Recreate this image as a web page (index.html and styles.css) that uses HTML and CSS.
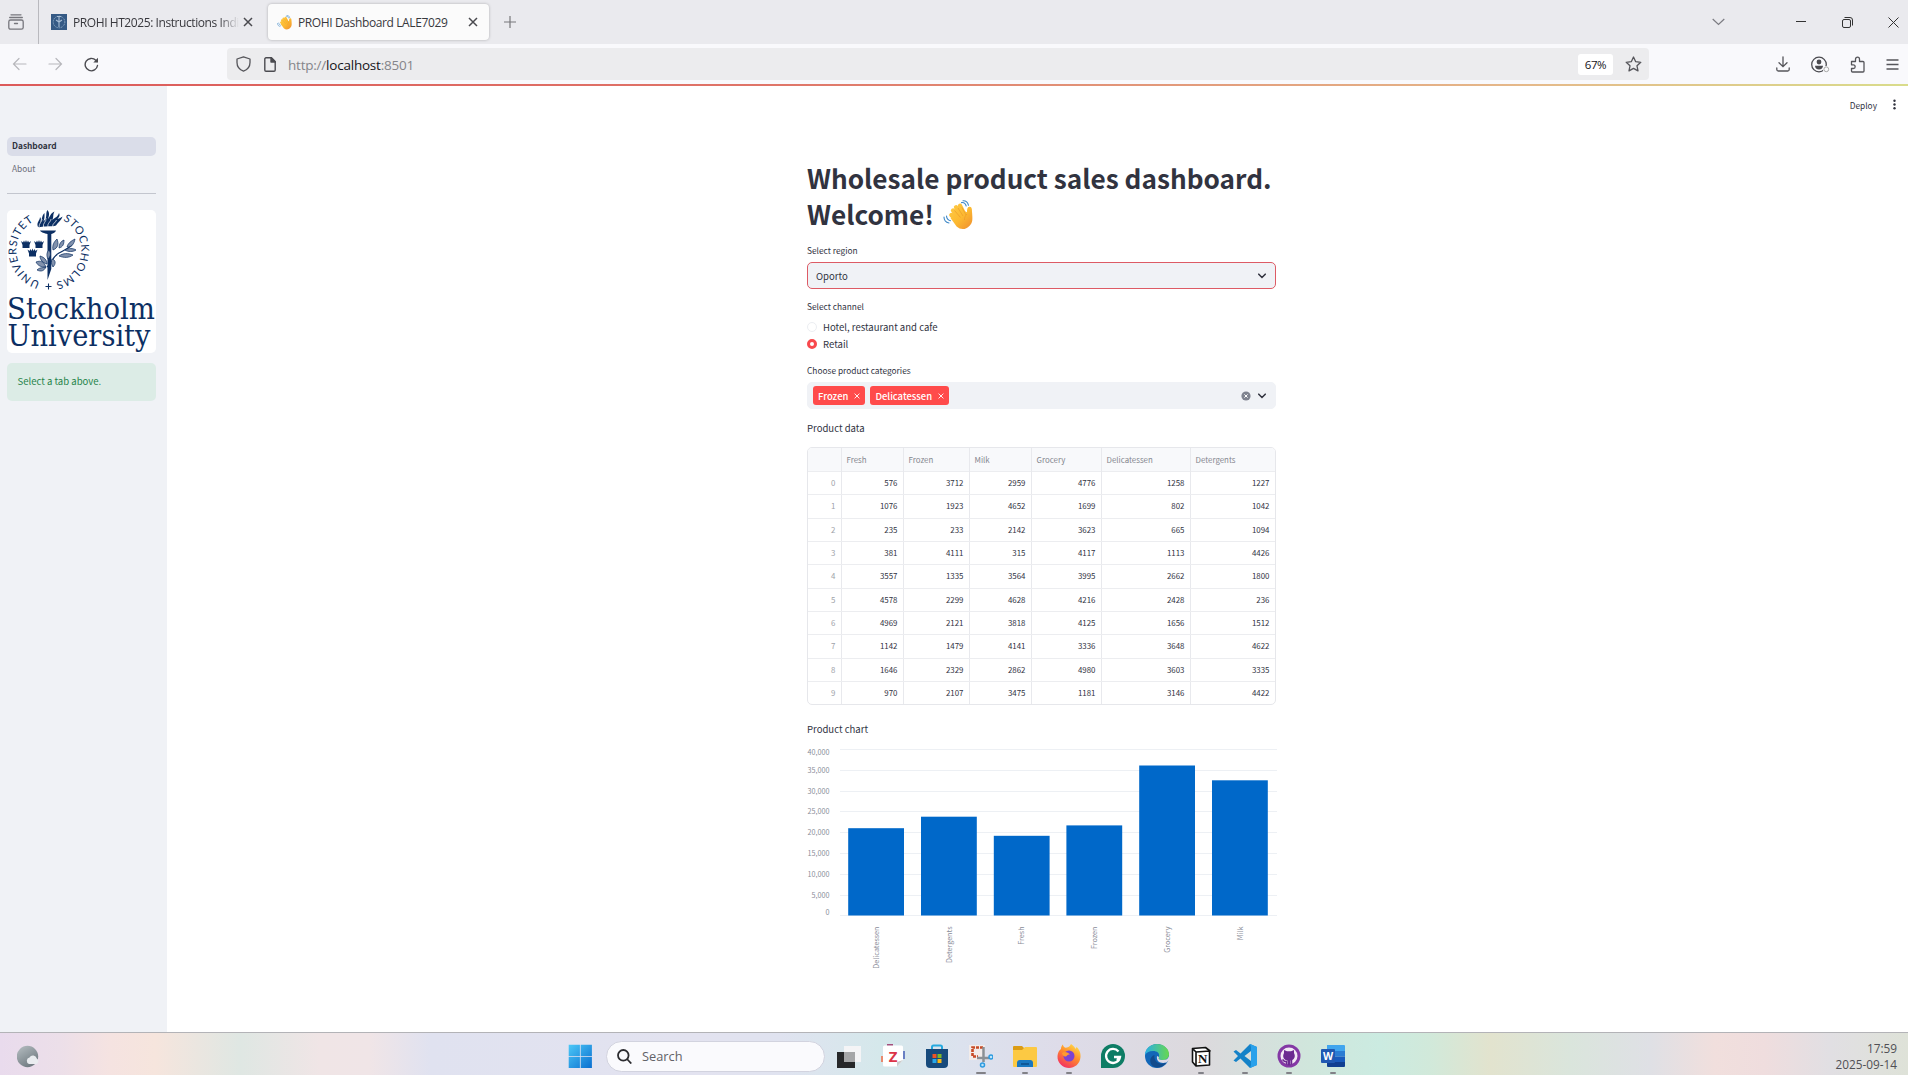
FILE: index.html
```html
<!DOCTYPE html>
<html lang="en">
<head>
<meta charset="utf-8">
<title>PROHI Dashboard LALE7029</title>
<link rel="stylesheet" href="styles.css">
</head>
<body>
<svg width="0" height="0" class="defs">
  <defs>
    <linearGradient id="gHand" x1="0" y1="0" x2="30" y2="30" gradientUnits="userSpaceOnUse"><stop offset="0" stop-color="#ffd24d"/><stop offset=".6" stop-color="#fcb931"/><stop offset="1" stop-color="#ee8a2e"/></linearGradient>
    <symbol id="wave" viewBox="0 0 30 30">
      <g fill="none" stroke="url(#gHand)" stroke-linecap="round" stroke-width="4.300"><path d="M10 10.500l7 9M13 7.200l7 10M17 5.700l5.500 11M8.300 15l8 8"/></g>
      <path d="M10 17 20 10.500l4 1.800c0-3 .2-5.200 2.400-5.600 2.800-.3 2.500 3 2.700 6 .4 6.500.9 9.500-2.500 13-4 4.300-9 4.300-13 .8L7.500 18z" fill="url(#gHand)"/>
      <path d="M11.500 10.500l6 7M15 8l5 8M19 7.500l4 7.500M24 14c-2 2-2.500 3.500-2.500 6" fill="none" stroke="#e8952a" stroke-width=".6"/>
      <path d="M18.500 2.600c2.500-.4 4 1 4.700 3.400M20 .8c3-.2 4.800 1.800 5.500 4.500M3.500 16c.2 2.500 1.700 4.200 4 4.700M1 17c0 3.200 2 5.400 5 6" fill="none" stroke="#3c87c7" stroke-width="1.100" stroke-linecap="round"/>
    </symbol>
    <symbol id="x" viewBox="0 0 10 10"><path d="M1 1l8 8M9 1 1 9" fill="none" stroke="currentColor" stroke-width="1.500"/></symbol>
    <symbol id="chev" viewBox="0 0 10 10"><path d="M2.300 3.500l2.700 2.700 2.700-2.700" fill="none" stroke="currentColor" stroke-width="1.300" stroke-linecap="round"/></symbol>
  </defs>
</svg>

<header class="tabstrip">
  <svg class="recent" width="16" height="16" viewBox="0 0 16 16" fill="none" stroke="#77777d" stroke-width="1.300" stroke-linecap="round"><path d="M3 .8h10M1.700 3.500h12.600"/><rect x=".8" y="6" width="14.400" height="9.200" rx="1.800"/><path d="M6.500 9.500h3"/></svg>
  <div class="tab">
    <svg width="16" height="16" viewBox="0 0 16 16"><rect width="16" height="16" fill="#355a85"/><circle cx="8" cy="8" r="5.800" fill="none" stroke="#8eaac6" stroke-dasharray="1.200 .7"/><path d="M8 3v10M5 6l3 2 3-2M6 2.500h4" stroke="#a9bfd6" stroke-width="1.100" fill="none"/></svg>
    <span class="tab-title fade">PROHI HT2025: Instructions Indi</span>
    <svg class="tab-close" width="10" height="10"><use href="#x"/></svg>
  </div>
  <div class="tab active">
    <svg width="15" height="15"><use href="#wave"/></svg>
    <span class="tab-title">PROHI Dashboard LALE7029</span>
    <svg class="tab-close" width="10" height="10"><use href="#x"/></svg>
  </div>
  <svg class="plus" width="12" height="12" viewBox="0 0 12 12"><path d="M6 0v12M0 6h12" stroke="#77777b" stroke-width="1.200"/></svg>
  <div class="window-controls">
    <svg width="13" height="8" viewBox="0 0 13 8"><path d="M.7 1l5.800 5.500L12.300 1" fill="none" stroke="#7c7c82" stroke-width="1.200"/></svg>
    <svg width="10" height="10" viewBox="0 0 10 10"><path d="M0 4.500h10" stroke="#333"/></svg>
    <svg width="11" height="11" viewBox="0 0 11 11" fill="none" stroke="#333"><rect x=".5" y="2.500" width="8" height="8" rx="1.500"/><path d="M2.500.5h5.500a2.500 2.500 0 0 1 2.500 2.500v5.500"/></svg>
    <svg width="11" height="11" viewBox="0 0 11 11"><path d="M.5.5l10 10M10.500.5l-10 10" stroke="#333"/></svg>
  </div>
</header>

<nav class="toolbar">
  <div class="nav-buttons">
    <svg width="15" height="14" viewBox="0 0 15 14" fill="none" stroke="#b7b7bb" stroke-width="1.200" stroke-linecap="round"><path d="M14 7H1.500M7 1.500 1.500 7 7 12.500"/></svg>
    <svg width="15" height="14" viewBox="0 0 15 14" fill="none" stroke="#b7b7bb" stroke-width="1.200" stroke-linecap="round"><path d="M1 7h12.500M8 1.500 13.500 7 8 12.500"/></svg>
    <svg width="15" height="15" viewBox="0 0 15 15" fill="none" stroke="#4b4b50" stroke-width="1.400" stroke-linecap="round"><path d="M13.500 8.500a6.200 6.200 0 1 1-1.700-5.200l1.200 1.200"/><path d="M14 .8v4.700H9.300z" fill="#4b4b50" stroke="none"/></svg>
  </div>
  <div class="urlbar">
    <svg width="15" height="16" viewBox="0 0 15 16" fill="none" stroke="#55555a" stroke-width="1.300" stroke-linejoin="round"><path d="M7.500.8 14 3v3.500c0 4-2 7-6.500 8.700C3 13.500 1 10.500 1 6.500V3z"/></svg>
    <svg width="12" height="15" viewBox="0 0 12 15" fill="none" stroke="#4b4b50" stroke-width="1.400" stroke-linejoin="round"><path d="M2 .8h5.500l3.700 3.700V13a1.200 1.200 0 0 1-1.200 1.200H2A1.200 1.200 0 0 1 .8 13V2A1.200 1.200 0 0 1 2 .8z"/><path d="M7 .8V5h4.200z" fill="#4b4b50"/></svg>
    <span class="url">http://<b>localhost</b>:8501</span>
    <span class="zoom">67%</span>
    <svg width="17" height="16" viewBox="0 0 17 16"><path d="M8.500 1l2.200 4.700 5.100.6-3.800 3.500 1 5.100-4.500-2.500L4 14.900l1-5.100L1.200 6.300l5.100-.6z" fill="none" stroke="#55555a" stroke-width="1.300" stroke-linejoin="round"/></svg>
  </div>
  <div class="tools">
    <svg width="14" height="16" viewBox="0 0 14 16" fill="none" stroke="#55555a" stroke-width="1.300" stroke-linecap="round"><path d="M7 .8v9.700M3 6.700l4 4 4-4M.8 12v1.500c0 1 .7 1.500 1.500 1.500h9.400c.8 0 1.500-.5 1.500-1.500V12"/></svg>
    <svg width="19" height="17" viewBox="0 0 19 17"><circle cx="8" cy="8.500" r="7.300" fill="none" stroke="#4b4b50" stroke-width="1.300"/><circle cx="8" cy="6" r="2.400" fill="#4b4b50"/><path d="M4 9.800h8c0 2.200-1.600 3.700-4 3.700s-4-1.500-4-3.700z" fill="#4b4b50"/><circle cx="15.300" cy="13.300" r="3.400" fill="#f9f9fb"/><circle cx="15.300" cy="13.300" r="2.400" fill="none" stroke="#aaa"/></svg>
    <svg width="15" height="17" viewBox="0 0 15 17"><path d="M1.500 5.500h4V3.200a2 2 0 0 1 4 0v2.300h3.500a1 1 0 0 1 1 1V15a1 1 0 0 1-1 1H2.500a1 1 0 0 1-1-1v-2.500h1.800a1.800 1.800 0 0 0 0-3.700H1.500z" fill="none" stroke="#55555a" stroke-width="1.300" stroke-linejoin="round"/></svg>
    <svg width="13" height="11" viewBox="0 0 13 11"><path d="M.5 1h12M.5 5.500h12M.5 10h12" stroke="#55555a" stroke-width="1.300"/></svg>
  </div>
</nav>
<div class="progress"></div>

<div class="app">
  <aside class="sidebar">
    <a class="nav-item current">Dashboard</a>
    <a class="nav-item">About</a>
    <hr>
    <svg class="logo" width="149" height="143" viewBox="0 0 149 143">
      <defs>
        <path id="arcL" d="M33 71.800A33 33 0 0 1 27 11"/>
        <path id="arcR" d="M56 10.500A33 33 0 0 1 49 72"/>
      </defs>
      <g class="ring"><text><textPath href="#arcL" textLength="77">UNIVERSITET</textPath></text><text><textPath href="#arcR" textLength="80">STOCKHOLMS</textPath></text><path d="M41.500 73.500v6M38.500 76.500h6" stroke="#0c2f63" stroke-width="1.100"/></g>
      <g fill="#0c2f63">
        <path d="M33 20.500h16c-.5 2-2.700 2.700-4.700 3.500v35l-3.800 11V24c-3-.8-6.500-1.400-7.500-3.500z"/>
        <path d="M31 17c-2-5 2-6 2-10 1.500 1.500 1 4-.3 6C36 10 34 6 37.500 3c0 4 .3 5-1 8.500C41 8 38 3 40.500 0c2.500 3 1.500 6 .5 9 2.500-3 2.500-6 6.500-7.500-2 3.500-.5 6-2.500 9 3-3.500 5.500-3 7-7.500 1.500 3-.5 4.500-1.500 6 2-.3 3.500-1.500 5-2.500-1 4-4 5-6.500 9-2 1.200-4 .5-6 .7l-5 .3c-2 0-5.500 1-7 .5z"/>
        <g id="crown"><path d="M14 31l2 1.500 1-2 1 2 1-2.500 1 2.500 1-2 1 2 2-1.500-1.500 4v3h-7v-3z"/></g>
        <use href="#crown" x="13"/><use href="#crown" x="6.500" y="8.500"/>
      </g>
      <path d="M32 17c0-4 3-5 3-8M36.500 17c-1-4 3-5 2.500-9M41 17c-1-4 3-5 3-8M45.500 17c0-4 3-4 4-7" stroke="#fff" stroke-width=".7" fill="none"/>
      <g fill="#8292ad" stroke="#0c2f63" stroke-width=".7">
        <path d="M40 57c6-5 5-10 12-14 5-3 9-4 13-8" fill="none" stroke-width="1.200"/>
        <path d="M46 40c-1-5 1-8 4-11 2 5 1 9-4 11zM52 38c0-4 2-7 5-8 0 4-1 7-5 8zM60 37c1-4 4-6 8-8-1 5-3 8-8 8zM52 46c4-3 9-3 14-1-4 3-9 3-14 1zM58 40c4-2 8-2 11 0-3 2-8 2-11 0zM29 52c5-2 8 0 10 5-5 0-8-1-10-5zM33 46c4 1 7 4 7 8-4-1-7-4-7-8zM45 49c4 1 4 5 1 8-2-3-2-6-1-8zM30 60c3-3 6-2 9-3-2 4-5 5-9 3zM41 49c-2-4-1-7 1-9 2 3 2 6-1 9z"/>
      </g>
      <g class="wordmark"><text x="0" y="109" textLength="148" lengthAdjust="spacingAndGlyphs">Stockholm</text><text x=".5" y="135.500" textLength="143" lengthAdjust="spacingAndGlyphs">University</text></g>
    </svg>
    <div class="alert">Select a tab above.</div>
  </aside>

  <main class="main">
    <div class="app-bar"><span>Deploy</span><svg width="3" height="11" viewBox="0 0 3 11" fill="#31333f"><circle cx="1.500" cy="1.700" r="1.200"/><circle cx="1.500" cy="5.500" r="1.200"/><circle cx="1.500" cy="9.300" r="1.200"/></svg></div>
    <div class="content">
      <h1>Wholesale product sales dashboard.<br>Welcome! <svg class="hand" width="30" height="30"><use href="#wave"/></svg></h1>
      <label>Select region</label>
      <div class="field select focused"><span>Oporto</span><svg class="arrow" width="12" height="12"><use href="#chev"/></svg></div>
      <label>Select channel</label>
      <div class="radio"><i></i>Hotel, restaurant and cafe</div>
      <div class="radio checked"><i></i>Retail</div>
      <label>Choose product categories</label>
      <div class="field multi">
        <span class="tag">Frozen<svg width="6" height="6"><use href="#x"/></svg></span>
        <span class="tag">Delicatessen<svg width="6" height="6"><use href="#x"/></svg></span>
        <svg class="clear" width="10" height="10" viewBox="0 0 10 10"><circle cx="5" cy="5" r="4.600" fill="#7f838f"/><path d="M3.400 3.400l3.200 3.200M6.600 3.400 3.400 6.600" stroke="#fff" stroke-width="1"/></svg>
        <svg class="arrow" width="12" height="12"><use href="#chev"/></svg>
      </div>
      <p class="data-title">Product data</p>
      <table>
        <thead><tr><th></th><th>Fresh</th><th>Frozen</th><th>Milk</th><th>Grocery</th><th>Delicatessen</th><th>Detergents</th></tr></thead>
        <tbody>
          <tr><td>0</td><td>576</td><td>3712</td><td>2959</td><td>4776</td><td>1258</td><td>1227</td></tr>
          <tr><td>1</td><td>1076</td><td>1923</td><td>4652</td><td>1699</td><td>802</td><td>1042</td></tr>
          <tr><td>2</td><td>235</td><td>233</td><td>2142</td><td>3623</td><td>665</td><td>1094</td></tr>
          <tr><td>3</td><td>381</td><td>4111</td><td>315</td><td>4117</td><td>1113</td><td>4426</td></tr>
          <tr><td>4</td><td>3557</td><td>1335</td><td>3564</td><td>3995</td><td>2662</td><td>1800</td></tr>
          <tr><td>5</td><td>4578</td><td>2299</td><td>4628</td><td>4216</td><td>2428</td><td>236</td></tr>
          <tr><td>6</td><td>4969</td><td>2121</td><td>3818</td><td>4125</td><td>1656</td><td>1512</td></tr>
          <tr><td>7</td><td>1142</td><td>1479</td><td>4141</td><td>3336</td><td>3648</td><td>4622</td></tr>
          <tr><td>8</td><td>1646</td><td>2329</td><td>2862</td><td>4980</td><td>3603</td><td>3335</td></tr>
          <tr><td>9</td><td>970</td><td>2107</td><td>3475</td><td>1181</td><td>3146</td><td>4422</td></tr>
        </tbody>
      </table>
      <p class="chart-title">Product chart</p>
      <svg class="chart" width="470" height="235" viewBox="0 0 470 235">
        <path d="M33 4.500h437M33 25.500h437M33 46.500h437M33 66.500h437M33 87.500h437M33 108.500h437M33 129.500h437M33 150.500h437M33 170.500h437" stroke="#edf0f4"/>
        <g class="y-axis">
          <text x="22.500" y="10.200">40,000</text><text x="22.500" y="28.200">35,000</text><text x="22.500" y="49.200">30,000</text><text x="22.500" y="69.200">25,000</text><text x="22.500" y="90.200">20,000</text><text x="22.500" y="111.200">15,000</text><text x="22.500" y="131.700">10,000</text><text x="22.500" y="152.700">5,000</text><text x="22.500" y="169.700">0</text>
        </g>
        <g fill="#0068c9">
          <rect x="41.200" y="83.200" width="55.800" height="87.300"/><rect x="114" y="71.700" width="55.800" height="98.800"/><rect x="186.800" y="90.800" width="55.800" height="79.700"/><rect x="259.400" y="80.400" width="55.800" height="90.100"/><rect x="332.200" y="20.500" width="55.800" height="150"/><rect x="405" y="35.300" width="55.800" height="135.200"/>
        </g>
        <g class="x-axis">
          <text transform="translate(71.700 181.500) rotate(-90)">Delicatessen</text><text transform="translate(144.500 181.500) rotate(-90)">Detergents</text><text transform="translate(217 181.500) rotate(-90)">Fresh</text><text transform="translate(290 181.500) rotate(-90)">Frozen</text><text transform="translate(362.800 181.500) rotate(-90)">Grocery</text><text transform="translate(435.600 181.500) rotate(-90)">Milk</text>
        </g>
      </svg>
    </div>
  </main>
</div>

<footer class="taskbar">
  <svg class="weather" width="22" height="23" viewBox="0 0 22 23"><defs><linearGradient id="gMoon" x1="0" y1="0" x2=".6" y2="1"><stop stop-color="#b7bfc3"/><stop offset="1" stop-color="#707b81"/></linearGradient></defs><circle cx="10.500" cy="11.500" r="10.700" fill="url(#gMoon)"/><path d="M12 19a3.400 3.400 0 0 1 .5-6.500 4 4 0 0 1 7.300 1A3 3 0 0 1 19.500 19z" fill="#e9ecef"/></svg>
  <div class="dock">
    <svg class="start" width="24" height="24" viewBox="0 0 24 24"><defs><linearGradient id="gWin" x1="0" y1="0" x2="1" y2="1"><stop stop-color="#4cc8f7"/><stop offset="1" stop-color="#0a6fd0"/></linearGradient></defs><path d="M.7.700h11.200v11.200H.7zM12.700.700h11.200v11.200H12.700zM.7 12.700h11.200v11.200H.7zM12.700 12.700h11.200v11.200H12.700z" fill="url(#gWin)"/></svg>
    <div class="search"><svg width="15" height="15" viewBox="0 0 15 15" fill="none" stroke="#2c2c30" stroke-width="1.800"><circle cx="6.300" cy="6.300" r="5.300"/><path d="M10 10l4.300 4.500"/></svg>Search</div>
    <div class="apps">
      <div><svg viewBox="0 0 24 24"><path d="M7 2h17v16H7z" fill="#f4f4f6"/><path d="M0 8h18v16H0z" fill="#262729"/><path d="M7 8h11v10H7z" fill="#a5a6a8"/></svg></div>
      <div><svg viewBox="0 0 24 24"><path d="M6 0h6v4H6z" fill="#a34f7c"/><path d="M0 12h4v6H0z" fill="#e9896d"/><path d="M20 7h4v8h-4z" fill="#6a80c3"/><path d="M2 3a1.500 1.500 0 0 1 1.500-1.500h17A1.500 1.500 0 0 1 22 3v13l-6 6.500H3.500A1.500 1.500 0 0 1 2 21z" fill="#fff"/><path d="M22 16l-6 6.500V18z" fill="#ccc"/><text class="app-z" x="12" y="17.500">Z</text></svg></div>
      <div><svg viewBox="0 0 24 24"><path d="M7 5V3a1.500 1.500 0 0 1 1.500-1.500h7A1.500 1.500 0 0 1 17 3v2" stroke="#26a9df" stroke-width="2" fill="none"/><path d="M1 5h22v15a4 4 0 0 1-4 4H5a4 4 0 0 1-4-4z" fill="#174a7c"/><path d="M7.500 10h4v4h-4z" fill="#ef5325"/><path d="M12.500 10h4v4h-4z" fill="#7eb829"/><path d="M7.500 15h4v4h-4z" fill="#28a8ea"/><path d="M12.500 15h4v4h-4z" fill="#fdb813"/></svg></div>
      <div class="run wide"><svg viewBox="0 0 24 24"><path d="M0 1h16v15H0z" fill="#f2ecea"/><path d="M14 3.500H3.500v9H9" stroke="#c84b27" stroke-width="2.600" fill="none" stroke-dasharray="3 1"/><path d="M14.500 3v15M8 14h12" stroke="#8b9095" stroke-width="2.500"/><circle cx="22" cy="13" r="2" fill="#bfe3f8" stroke="#2c9be0" stroke-width="1.500"/><circle cx="13.500" cy="21" r="2" fill="#bfe3f8" stroke="#2c9be0" stroke-width="1.500"/></svg></div>
      <div class="run"><svg viewBox="0 0 24 24"><path d="M0 3a1 1 0 0 1 1-1h8l2 2v4H0z" fill="#dc9c14"/><path d="M0 6h9l3-3h11a1 1 0 0 1 1 1v18a1 1 0 0 1-1 1H1a1 1 0 0 1-1-1z" fill="#fcc943"/><path d="M4 23v-4a3 3 0 0 1 3-3h10a3 3 0 0 1 3 3v4z" fill="#1978c1"/><path d="M8 20h8" stroke="#0b4e8a" stroke-width="1.500"/></svg></div>
      <div class="run"><svg viewBox="0 0 24 24"><defs><linearGradient id="gFox" x1=".8" y1="0" x2=".2" y2="1"><stop stop-color="#ffe048"/><stop offset=".45" stop-color="#ff8b2b"/><stop offset="1" stop-color="#f22768"/></linearGradient></defs><path d="M4 5c0-2 .8-3.500 2-4.500 0 2 1 2.500 2.500 3.200 2 0 4-.5 5.500-3.700 3 2 3.800 3.500 4.500 5l1-2C22 5 24 9 23.500 13 23 20 17.500 24 12 24S0 19.500.5 12C.8 8.500 2 6.500 4 5z" fill="url(#gFox)"/><circle cx="12" cy="12" r="5.500" fill="#7c43d1"/><path d="M5 9c3-2 6-.5 8 1.500-3 0-3 1.500-4 2-2 .5-3.500-1-4-3.500z" fill="#ff9b2e"/></svg></div>
      <div><svg viewBox="0 0 24 24"><path d="M12 0a12 12 0 1 1 0 24H0V12A12 12 0 0 1 12 0z" fill="#0e7d65"/><path d="M17.500 7.500A7 7 0 1 0 19 13h-6M16 16l3-3" fill="none" stroke="#fff" stroke-width="2.300"/></svg></div>
      <div><svg viewBox="0 0 24 24"><defs><linearGradient id="gEdge"><stop stop-color="#29aee5"/><stop offset="1" stop-color="#68d84f"/></linearGradient></defs><circle cx="12" cy="12" r="12" fill="#1267b8"/><path d="M0 11C0 5 5 0 12 0s12 5 12 10c0 4-3 6-6 6-4 0-5-1-4-3 1-4-2-6-6-6-4 0-7 2-8 4z" fill="url(#gEdge)"/><path d="M9.500 11c-1 5 3 9.500 9 8.500l3-1C17 25 9 25 6 20c-2-4 0-8 3.500-9z" fill="#124b8c"/><path d="M14 13c-1 2 0 3 4 3 3 0 5-1 6-4v4l-2.500 2.500C16 20 11 18 12 12z" fill="#dcd9e5"/></svg></div>
      <div class="run"><svg viewBox="0 0 24 24"><path d="M3.500 4.500 7 8v14l-3.500-4zM3.500 4.500l13-1L21 7 7 8zM7 8l13.500-1v14L7 22z" fill="#fff" stroke="#111" stroke-width="1.600" stroke-linejoin="round"/><text class="app-n" x="13.800" y="19">N</text></svg></div>
      <div class="run"><svg viewBox="0 0 24 24"><path d="M17 0l7 3v18l-7 3L7.500 14.500 3 18l-2.500-1.500L5 12 .5 7.500 3 6l4.500 3.500zM18 7l-6.500 5 6.500 5z" fill="#1482c8" fill-rule="evenodd"/><path d="M17 0l7 3v18l-7 3 1-3V3z" fill="#29a1eb"/></svg></div>
      <div class="run"><svg viewBox="0 0 24 24"><circle cx="12" cy="12" r="11.500" fill="#8438a5"/><circle cx="12" cy="12" r="8.500" fill="#f3e9f5"/><path d="M9.500 20.500v-3c-3 .5-3-1.500-4-2M14.500 20.500v-5" stroke="#6c2a91" stroke-width="1.500" fill="none"/><path d="M7 6l3 1.300h4L17 6v3c2 4 0 7-3.500 7.500v5h-3v-5C7 16 5 13 7 9z" fill="#6c2a91"/></svg></div>
      <div class="run"><svg viewBox="0 0 24 24"><path d="M6 1h17a1 1 0 0 1 1 1v5H6z" fill="#41a5ee"/><path d="M6 7h18v5.500H6z" fill="#2b7cd3"/><path d="M6 12.500h18V18H6z" fill="#185abd"/><path d="M6 18h18v4a1 1 0 0 1-1 1H7a1 1 0 0 1-1-1z" fill="#103f91"/><rect y="5" width="14" height="14" rx="1" fill="#2059b2"/><text class="app-w" x="7" y="16">W</text></svg></div>
    </div>
  </div>
  <div class="clock">17:59<br>2025-09-14</div>
</footer>
</body>
</html>
```
FILE: styles.css
```css
* { box-sizing: border-box; }
html, body { margin: 0; height: 100%; }
body {
  display: flex;
  flex-direction: column;
  height: 1075px;
  overflow: hidden;
  background: #fff;
  color: #31333f;
  font-family: "Noto Sans CJK SC", "Noto Sans", sans-serif;
  font-size: 9.55px;
}
svg { display: block; flex: none; }
.defs { position: absolute; }

/* browser window */
.tabstrip {
  display: flex;
  align-items: center;
  height: 44px;
  flex: none;
  background: #eaeaee;
  font-family: "Open Sans", sans-serif;
  font-size: 12px;
  color: #38383d;
}
.recent { margin: 0 14px 0 8px; }
.tab {
  display: flex;
  align-items: center;
  width: 230px;
  height: 44px;
  padding: 0 15px 0 12px;
  border-left: 1px solid #b9b9be;
}
.tab-title {
  margin-left: 6px;
  flex: 1;
  min-width: 0;
  overflow: hidden;
  white-space: nowrap;
  letter-spacing: -0.42px;
}
.fade {
  margin-right: 4px;
  mask-image: linear-gradient(90deg, #000 88%, transparent);
}
.tab-close { color: #4a4a4f; }
.tab.active {
  width: 221px;
  height: 36px;
  padding: 0 11px 0 9px;
  border: 0;
  border-radius: 4px;
  background: #fbfbfb;
  box-shadow: 0 0 3px #0004;
}
.active .tab-title { letter-spacing: -0.38px; }
.plus { margin-left: 15px; }
.window-controls {
  display: flex;
  align-items: center;
  margin-left: auto;
  padding-right: 9px;
}
.window-controls svg:nth-child(2) { margin-left: 71px; }
.window-controls svg:nth-child(3) { margin-left: 36px; }
.window-controls svg:nth-child(4) { margin-left: 35px; }
.toolbar {
  display: flex;
  align-items: center;
  height: 40px;
  flex: none;
  background: #f9f9fc;
}
.nav-buttons {
  display: flex;
  align-items: center;
  gap: 21px;
  width: 227px;
  padding-left: 12px;
}
.urlbar {
  display: flex;
  align-items: center;
  width: 1422px;
  height: 32px;
  padding: 0 7px 0 9px;
  border-radius: 4px;
  background: #ececee;
  font-family: "Open Sans", sans-serif;
  font-size: 13.5px;
  color: #85858a;
}
.urlbar svg:nth-child(2) { margin: 0 12px 0 13px; }
.url { padding-top: 1px; letter-spacing: -0.22px; }
.url b { font-weight: 400; color: #15141a; }
.zoom {
  margin: 0 12px 0 auto;
  width: 35px;
  height: 21px;
  border-radius: 3px;
  background: #fff;
  color: #15141a;
  font-size: 11.5px;
  line-height: 21px;
  letter-spacing: -0.4px;
  text-align: center;
}
.tools {
  display: flex;
  align-items: center;
  flex: 1;
  justify-content: space-between;
  padding: 0 9px 0 127px;
}
.tools svg:nth-child(2) { margin-right: -2px; }
.progress {
  height: 2px;
  flex: none;
  background: linear-gradient(90deg, #dc5a5a, #df7468 40%, #e5b98a 80%, #d9dc8b);
}

/* application */
.app { display: flex; height: 946px; flex: none; }
.sidebar {
  width: 167px;
  padding: 51px 11px 0 7px;
  background: #f0f2f6;
}
.nav-item {
  display: block;
  height: 19px;
  margin-bottom: 4px;
  padding-left: 5px;
  border-radius: 5px;
  color: #6c6e79;
  font-size: 8.35px;
  line-height: 17px;
}
.nav-item.current { background: #dadde9; color: #31333f; font-weight: 700; }
hr { margin: 14px 0 16px; border: 0; border-top: 1px solid #c3c6ce; }
.logo { border-radius: 5px; background: #fff; }
.ring { fill: #0c2f63; font: 11px Lato, sans-serif; }
.wordmark { fill: #0c2f63; font: 30px "DejaVu Serif", serif; }
.alert {
  height: 38px;
  margin-top: 10px;
  padding-left: 10.5px;
  border-radius: 5px;
  background: #dcece6;
  color: #27844a;
  line-height: 37px;
}
.main { flex: 1; }
.app-bar {
  display: flex;
  align-items: center;
  justify-content: flex-end;
  gap: 16px;
  height: 37px;
  padding-right: 12px;
  font-size: 8.35px;
}
.content { width: 470px; margin: 37px 0 0 640px; }
h1 {
  margin: 0 0 11px;
  font-size: 26.2px;
  line-height: 36px;
  white-space: nowrap;
}
.hand { display: inline-block; vertical-align: -5px; margin-left: 3px; }
label {
  display: block;
  height: 16px;
  margin-top: 10px;
  font-size: 8.35px;
  line-height: 15px;
}
.field {
  display: flex;
  align-items: center;
  width: 469px;
  height: 27px;
  margin-top: 3px;
  padding: 0 7px 0 8px;
  border: 1px solid #f0f2f6;
  border-radius: 5px;
  background: #f0f2f6;
}
.focused { border-color: #dd5b65; }
.arrow { margin-left: auto; }
label + .radio { margin-top: 4px; }
.radio { display: flex; align-items: center; gap: 6px; height: 17px; line-height: 16px; padding-bottom: 1px; }
.radio i {
  width: 10px;
  height: 10px;
  border: 1px solid #eceef2;
  border-radius: 50%;
}
.radio.checked i { border: 3px solid #f8494d; }
.multi { padding-left: 5px; gap: 5px; }
.tag {
  display: flex;
  align-items: center;
  gap: 6px;
  height: 19px;
  padding: 0 5px;
  border-radius: 3px;
  background: #ff4b4b;
  color: #fff;
  font-weight: 500;
  font-size: 9.45px;
}
.multi .clear { margin-left: auto; }
.multi .arrow { margin-left: 0; }
p { margin: 0; height: 17px; line-height: 17px; }
.data-title { margin-top: 11px; }
.chart-title { margin-top: 16px; }
table {
  display: block;
  width: 469px;
  height: 258px;
  margin-top: 10px;
  overflow: hidden;
  border: 1px solid #e6e7eb;
  border-radius: 5px;
  font-size: 7.9px;
}
thead, tbody { display: block; }
tr {
  display: grid;
  grid-template-columns: 34px 62px 66px 62px 70px 89px 84px;
  height: 23.33px;
  border-bottom: 1px solid #ecedf0;
  line-height: 22px;
}
thead tr { height: 24px; background: #f8f9fb; line-height: 24px; }
tbody tr:last-child { border: 0; }
th, td { padding: 0 5.5px 0 4.5px; border-right: 1px solid #e8e9ed; text-align: right; }
th { color: #85878f; font-weight: 400; text-align: left; }
td:first-child { color: #a0a2a9; }
th:last-child, td:last-child { border: 0; }
.chart { margin-top: 7px; font-size: 7.2px; fill: #8a8d99; }
.y-axis { text-anchor: end; }
.x-axis { text-anchor: end; }

/* desktop taskbar */
.taskbar {
  display: flex;
  height: 43px;
  flex: none;
  border-top: 1px solid #b3b3b7;
  background: linear-gradient(90deg, #e9dbed 0, #ecdfe9 60px, #f5e3e1 110px, #f6e5dd 155px, #dfe7e3 240px, #f0e5e6 320px, #f0e5e7 370px, #e0e2f0 430px, #e3e3f0 700px, #e0e3f0 780px, #d5e8eb 880px, #dce2ee 960px, #dedce9 1060px, #dcd9dd 1200px, #d0e6dc 1310px, #cbebe1 1380px, #d1e9da 1430px, #e2e3ce 1490px, #dae5dc 1570px, #dfe0e5 1650px, #f1dfdd 1715px, #efddde 1765px, #e1dfe3 1830px, #dee2d8 1908px);
}
.weather { margin: 12px 0 0 17px; }
.dock { display: flex; margin-left: 529px; }
.start { margin-top: 11px; }
.search {
  display: flex;
  align-items: center;
  gap: 10px;
  width: 219px;
  height: 31px;
  margin: 8px 0 0 14px;
  padding: 0 0 1px 10px;
  border: 1px solid #d2d3df;
  border-radius: 16px;
  background: #fafafd;
  color: #626268;
  font: 12.8px "Open Sans", sans-serif;
}
.apps { display: flex; margin-left: 2px; }
.apps div {
  position: relative;
  display: flex;
  justify-content: center;
  width: 44px;
  padding-top: 11px;
}
.apps svg { width: 24px; height: 24px; }
.apps .run::after {
  content: "";
  position: absolute;
  bottom: 1px;
  left: 19px;
  width: 6px;
  height: 2px;
  border-radius: 1px;
  background: #818187;
}
.apps .wide::after { left: 17px; width: 10px; }
.app-z, .app-n, .app-w { text-anchor: middle; font: 700 15px "Open Sans", sans-serif; }
.app-z { fill: #dc3548; }
.app-n { font: 700 13px "Liberation Serif", serif; fill: #111; }
.app-w { font-size: 10.500px; fill: #fff; }
.clock {
  margin: 7px 11px 0 auto;
  color: #505055;
  font: 11.8px/16px "Open Sans", sans-serif;
  text-align: right;
}
```
